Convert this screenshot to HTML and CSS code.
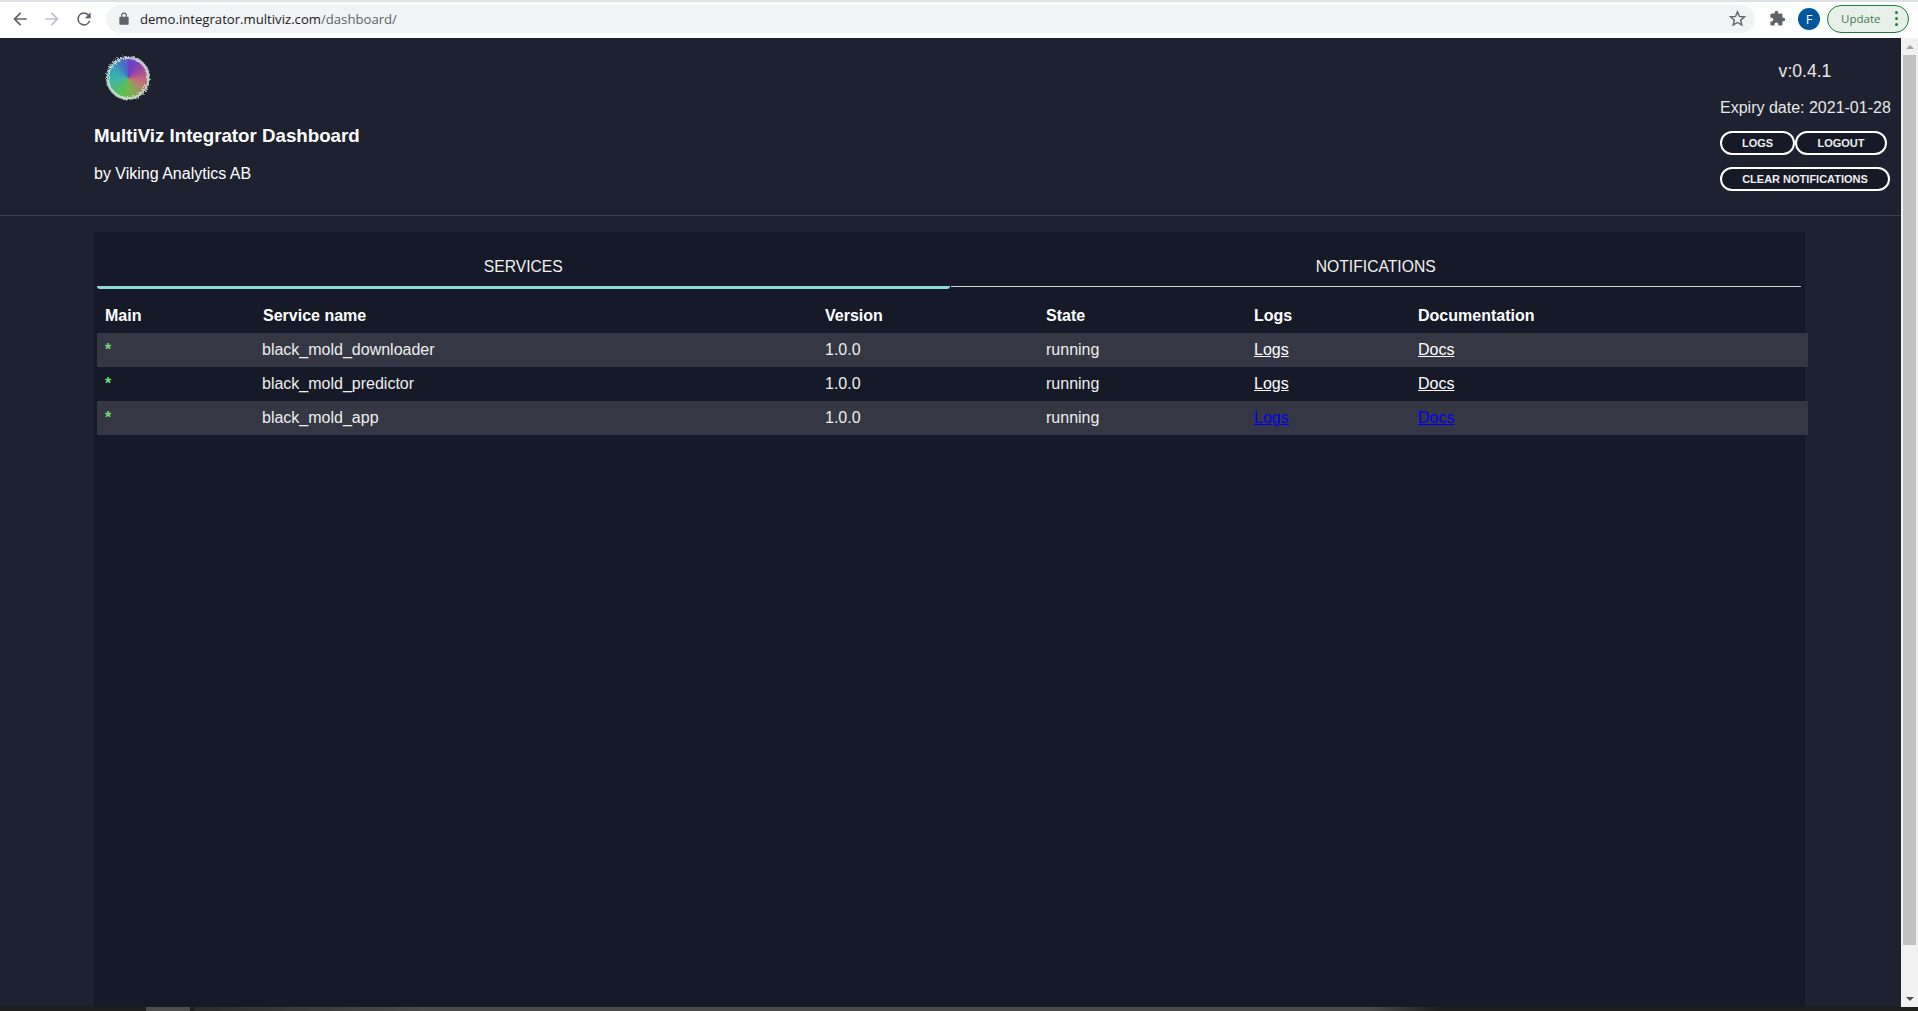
FILE: index.html
```html
<!DOCTYPE html>
<html lang="en">
<head>
    <meta charset="UTF-8">
    <title>MultiViz Integrator Dashboard</title>
    <link rel="stylesheet" href="styles.css">
</head>
<body>

    <!-- browser toolbar -->
    <div class="toolbar">
        <div class="nav-icons">
            <svg class="nav-icon" viewBox="0 0 24 24"><path d="M20 11H7.8l5.6-5.6L12 4l-8 8 8 8 1.4-1.4L7.8 13H20z" fill="#5f6368"/></svg>
            <svg class="nav-icon" viewBox="0 0 24 24"><path d="M4 11h12.2l-5.6-5.6L12 4l8 8-8 8-1.4-1.4 5.6-5.6H4z" fill="#bdc1c6"/></svg>
            <svg class="nav-icon" viewBox="0 0 24 24"><path d="M17.65 6.35A8 8 0 1 0 19.73 14h-2.08A6 6 0 1 1 12 6c1.66 0 3.14.69 4.22 1.78L13 11h7V4z" fill="#5f6368"/></svg>
        </div>
        <div class="omnibox">
            <svg class="lock" viewBox="0 0 24 24"><path d="M18 8h-1V6a5 5 0 0 0-10 0v2H6a2 2 0 0 0-2 2v10a2 2 0 0 0 2 2h12a2 2 0 0 0 2-2V10a2 2 0 0 0-2-2zM9 6a3 3 0 0 1 6 0v2H9z" fill="#5f6368"/></svg>
            <span class="url">demo.integrator.multiviz.com<span class="url-path">/dashboard/</span></span>
            <svg class="star" viewBox="0 0 24 24"><path d="M12 3.6l2.5 5.8 6.3.6-4.8 4.1 1.5 6.2-5.5-3.3-5.5 3.3L8 14.1 3.2 10l6.3-.6z" fill="none" stroke="#5f6368" stroke-width="1.8"/></svg>
        </div>
        <svg class="puzzle" viewBox="0 0 24 24"><path d="M20.5 11H19V7a2 2 0 0 0-2-2h-4V3.5a2.5 2.5 0 0 0-5 0V5H4a2 2 0 0 0-2 2v3.8h1.5a2.7 2.7 0 0 1 0 5.4H2V20a2 2 0 0 0 2 2h3.8v-1.5a2.7 2.7 0 0 1 5.4 0V22H17a2 2 0 0 0 2-2v-4h1.5a2.5 2.5 0 0 0 0-5z" fill="#5f6368"/></svg>
        <div class="avatar">F</div>
        <div class="update">
            <span class="update-label">Update</span>
            <span class="dots"><i></i><i></i><i></i></span>
        </div>
    </div>

    <div class="viewport">
        <div class="page">
            <header class="header">
                <div class="brand">
                    <div class="logo"></div>
                    <h1>MultiViz Integrator Dashboard</h1>
                    <p class="byline">by Viking Analytics AB</p>
                </div>
                <div class="meta">
                    <p class="version">v:0.4.1</p>
                    <p class="expiry">Expiry date: 2021-01-28</p>
                    <div class="btn-row">
                        <button class="btn btn-logs">LOGS</button>
                        <button class="btn btn-logout">LOGOUT</button>
                    </div>
                    <button class="btn btn-clear">CLEAR NOTIFICATIONS</button>
                </div>
            </header>

            <main class="panel">
                <div class="tabs">
                    <div class="tab tab-active">SERVICES</div>
                    <div class="tab">NOTIFICATIONS</div>
                </div>
                <table class="services">
                    <colgroup>
                        <col class="col-main">
                        <col class="col-name">
                        <col class="col-version">
                        <col class="col-state">
                        <col class="col-logs">
                        <col>
                    </colgroup>
                    <thead>
                        <tr>
                            <th>Main</th>
                            <th class="th-name">Service name</th>
                            <th>Version</th>
                            <th>State</th>
                            <th>Logs</th>
                            <th>Documentation</th>
                        </tr>
                    </thead>
                    <tbody>
                        <tr>
                            <td class="main-mark">*</td>
                            <td>black_mold_downloader</td>
                            <td>1.0.0</td>
                            <td>running</td>
                            <td><a href="#">Logs</a></td>
                            <td><a href="#">Docs</a></td>
                        </tr>
                        <tr>
                            <td class="main-mark">*</td>
                            <td>black_mold_predictor</td>
                            <td>1.0.0</td>
                            <td>running</td>
                            <td><a href="#">Logs</a></td>
                            <td><a href="#">Docs</a></td>
                        </tr>
                        <tr>
                            <td class="main-mark">*</td>
                            <td>black_mold_app</td>
                            <td>1.0.0</td>
                            <td>running</td>
                            <td><a class="link-blue" href="#">Logs</a></td>
                            <td><a class="link-blue" href="#">Docs</a></td>
                        </tr>
                    </tbody>
                </table>
            </main>
        </div>

        <div class="vscroll">
            <span class="arrow-up"></span>
            <div class="vthumb"></div>
            <span class="arrow-down"></span>
        </div>
    </div>

    <div class="hscroll"><div class="hthumb"></div></div>

    <!-- rough edge of the logo -->
    <svg class="defs" width="0" height="0">
        <filter id="fuzz" x="-20%" y="-20%" width="140%" height="140%">
            <feTurbulence type="fractalNoise" baseFrequency="0.6" numOctaves="2" seed="4"/>
            <feDisplacementMap in="SourceGraphic" scale="5"/>
            <feGaussianBlur stdDeviation="0.6"/>
        </filter>
    </svg>

</body>
</html>
```

FILE: styles.css
```css
* {
box-sizing: border-box;
}

body {
font-family: "Liberation Sans", Arial, sans-serif;
background-color: #1e2130;
color: #fff;
margin: 0;
height: 1011px;
overflow: hidden;
display: flex;
flex-direction: column;
}

p,
h1 {
margin: 0;
}

/* browser toolbar */

.toolbar {
height: 38px;
flex: none;
background-color: #fff;
border-top: 2px solid #dee1e6;
display: flex;
align-items: center;
padding: 0 9px 3px 0;
font-family: "Open Sans", sans-serif;
}

.nav-icons {
display: flex;
gap: 12px;
width: 106px;
padding-left: 10px;
}

.nav-icon {
width: 20px;
height: 20px;
}

.omnibox {
width: 1650px;
height: 28px;
background-color: #f1f3f4;
border-radius: 14px;
display: flex;
align-items: center;
padding: 0 8px 0 11px;
}

.lock {
width: 14px;
height: 14px;
}

.url {
margin-left: 9px;
font-size: 13.15px;
color: #202124;
flex: 1;
}

.url-path {
color: #5f6368;
}

.star {
width: 19px;
height: 19px;
}

.puzzle {
width: 17px;
height: 17px;
margin-left: 14px;
}

.avatar {
width: 22px;
height: 22px;
margin-left: 12px;
border-radius: 50%;
background-color: #01579b;
color: #fff;
font-size: 13px;
display: flex;
align-items: center;
justify-content: center;
}

.update {
width: 82px;
height: 28px;
margin-left: 7px;
border: 1px solid #188038;
border-radius: 14px;
background-color: #e8f0ea;
display: flex;
align-items: center;
padding-left: 13px;
gap: 15px;
}

.update-label {
font-size: 11.5px;
color: #3c7a52;
}

.dots {
display: flex;
flex-direction: column;
gap: 3px;
}

.dots i {
width: 3px;
height: 3px;
background-color: #188038;
border-radius: 50%;
}

/* page */

.viewport {
flex: 1;
display: flex;
min-height: 0;
}

.page {
flex: 1;
min-width: 0;
}

.header {
height: 178px;
border-bottom: 1px solid #3b3e4e;
display: flex;
justify-content: space-between;
padding: 0 11px 0 94px;
}

.brand {
padding-top: 19px;
}

.logo {
position: relative;
width: 42px;
height: 42px;
margin-left: 13px;
border-radius: 50%;
background: conic-gradient(#6f3fc4 20deg, #b0508f 70deg, #c4707a 105deg, #7fae4e 165deg, #5cbf52 200deg, #3fb3a8 265deg, #35a5b8 300deg, #4a6cc8 345deg, #6f3fc4 380deg);
filter: blur(0.7px);
}

.logo::after {
content: "";
position: absolute;
inset: -1px;
border: 3px solid #d6e8de;
border-radius: 50%;
opacity: 0.8;
filter: url(#fuzz);
}

h1 {
font-size: 18.72px;
line-height: 24px;
margin-top: 25px;
}

.byline {
font-size: 16px;
line-height: 20px;
margin-top: 16px;
}

.meta {
width: 170px;
padding-top: 22px;
color: #e8e8e8;
text-align: center;
}

.version {
font-size: 17.6px;
line-height: 22px;
}

.expiry {
font-size: 16px;
line-height: 20px;
margin-top: 16px;
white-space: nowrap;
}

.btn-row {
display: flex;
margin-top: 13px;
}

.btn {
display: block;
height: 24px;
padding: 0;
background-color: #161a28;
color: #eee;
border: 2px solid #fff;
border-radius: 12px;
font-family: inherit;
font-size: 11px;
font-weight: bold;
}

.btn-logs {
width: 75px;
}

.btn-logout {
width: 92px;
}

.btn-clear {
width: 170px;
margin-top: 12px;
}

/* services panel */

.panel {
width: 1711px;
height: 791px;
margin: 16px 0 0 94px;
padding: 0 0 0 3px;
background-color: #161a28;
}

.tabs {
display: flex;
align-items: flex-start;
gap: 1px;
width: 1704px;
height: 57px;
}

.tab {
flex: 1;
height: 55px;
text-align: center;
font-size: 15.7px;
line-height: 18px;
padding-top: 26px;
color: #f2f2f2;
border-bottom: 1px solid #d0d0d0;
}

.tab-active {
flex: none;
width: 852.5px;
height: 57px;
border-bottom: 3px solid #86ddcf;
border-radius: 0 0 3px 3px;
}

.services {
width: 1711px;
border-collapse: collapse;
table-layout: fixed;
font-size: 16px;
margin-top: -3px;
}

.col-main {
width: 157px;
}

.col-name {
width: 563px;
}

.col-version {
width: 221px;
}

.col-state {
width: 208px;
}

.col-logs {
width: 164px;
}

.services th {
height: 47px;
padding: 12px 8px 0;
text-align: left;
color: #fff;
}

.services th.th-name {
padding-left: 9px;
}

.services td {
height: 34px;
padding: 0 8px;
color: #eee;
}

.services tbody tr:nth-child(odd) {
background-color: #353844;
}

.services td.main-mark {
color: #6fdc7c;
font-weight: bold;
vertical-align: top;
padding-top: 8px;
line-height: 18px;
font-size: 16px;
}

.services a {
color: #fff;
}

.services a.link-blue {
color: #0000ee;
}

/* scrollbars */

.vscroll {
width: 17px;
flex: none;
background-color: #f1f1f1;
display: flex;
flex-direction: column;
align-items: center;
padding: 7px 0 6px;
}

.arrow-up {
border: 4px solid transparent;
border-top: none;
border-bottom: 4px solid #a3a3a3;
}

.arrow-down {
margin-top: auto;
border: 4px solid transparent;
border-bottom: none;
border-top: 4px solid #505050;
}

.vthumb {
width: 13px;
height: 890px;
margin-top: 6px;
background-color: #c1c1c1;
}

.hscroll {
height: 4px;
flex: none;
background: linear-gradient(to right, #1e1e1c 194px, #2c2c2a 195px, #4a4a4a 420px, #4a4a4a 1370px, #1e1e1c 1440px);
padding-left: 146px;
}

.hthumb {
width: 44px;
height: 4px;
background-color: #4d4d4d;
}

.defs {
position: absolute;
}
```
